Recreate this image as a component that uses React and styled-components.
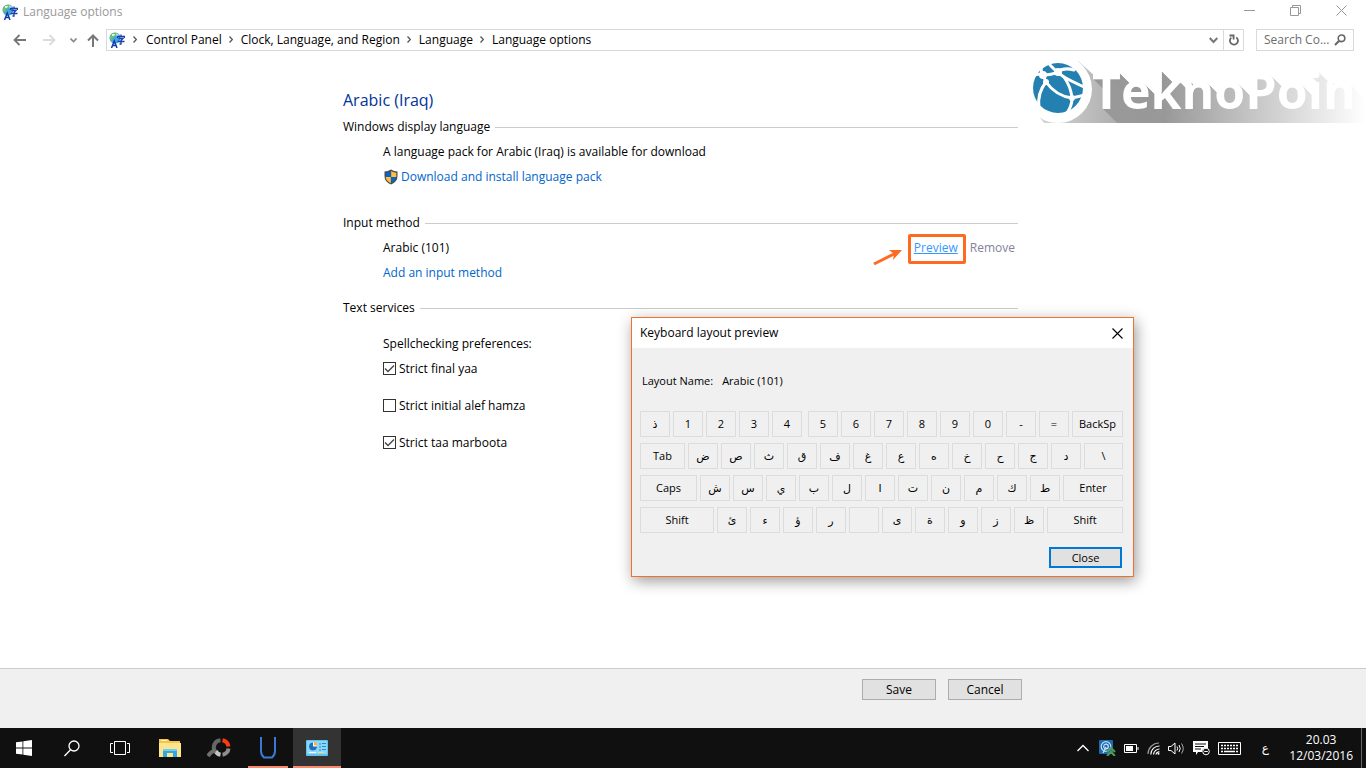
import { useState } from "react";
import styled, { createGlobalStyle, css } from "styled-components";

const BREADCRUMBS = [
  "Control Panel",
  "Clock, Language, and Region",
  "Language",
  "Language options",
];

// a key is either a plain string or { label, width, fill, gap }
const KEY_ROWS = [
  [
    "ذ", "1", "2", "3", "4",
    { label: "5", gap: true },
    "6", "7", "8", "9", "0", "-", "=",
    { label: "BackSp", fill: true },
  ],
  [
    { label: "Tab", width: 45 },
    "ض", "ص", "ث", "ق", "ف", "غ", "ع", "ه", "خ", "ح", "ج", "د",
    { label: "\\", fill: true },
  ],
  [
    { label: "Caps", width: 57 },
    "ش", "س", "ي", "ب", "ل", "ا", "ت", "ن", "م", "ك", "ط",
    { label: "Enter", fill: true },
  ],
  [
    { label: "Shift", width: 74 },
    "ئ", "ء", "ؤ", "ر", "", "ى", "ة", "و", "ز", "ظ",
    { label: "Shift", fill: true },
  ],
];

const SPELLING = [
  { id: "yaa", label: "Strict final yaa", checked: true },
  { id: "hamza", label: "Strict initial alef hamza", checked: false },
  { id: "marboota", label: "Strict taa marboota", checked: true },
];

export default function App() {
  const [prefs, setPrefs] = useState(SPELLING);

  const toggle = (id) => {
    setPrefs(prefs.map((p) => (p.id === id ? { ...p, checked: !p.checked } : p)));
  };

  return (
    <>
      <GlobalStyle />
      <Screen>
        <TitleBar>
          <LanguageIcon />
          <WindowTitle>Language options</WindowTitle>
          <WindowControls />
        </TitleBar>
        <NavBar />
        <Main>
          <Content>
            <Heading>Arabic (Iraq)</Heading>

            <Section $space={24}>
              <Legend>Windows display language</Legend>
              <Row>A language pack for Arabic (Iraq) is available for download</Row>
              <Row>
                <ShieldIcon />
                <Link href="#download">Download and install language pack</Link>
              </Row>
            </Section>

            <Section $space={13}>
              <Legend>Input method</Legend>
              <Row>
                Arabic (101)
                <Actions>
                  <Highlight>
                    <PreviewLink href="#preview">Preview</PreviewLink>
                    <Arrow viewBox="0 0 30 18">
                      <path d="M1 16L21 6" stroke="#ff6a23" strokeWidth="3" fill="none" />
                      <path d="M29 2L16 2L21 6L20 12Z" fill="#ff6a23" />
                    </Arrow>
                  </Highlight>
                  <RemoveLink href="#remove">Remove</RemoveLink>
                </Actions>
              </Row>
              <Row>
                <Link href="#add">Add an input method</Link>
              </Row>
            </Section>

            <Section $space={0}>
              <Legend>Text services</Legend>
              <Preferences>
                <Row>Spellchecking preferences:</Row>
                {prefs.map((p) => (
                  <CheckRow key={p.id}>
                    <Checkbox
                      type="checkbox"
                      checked={p.checked}
                      onChange={() => toggle(p.id)}
                    />
                    {p.label}
                  </CheckRow>
                ))}
              </Preferences>
            </Section>
          </Content>
        </Main>
        <Footer>
          <FooterButtons>
            <Button>Save</Button>
            <Button>Cancel</Button>
          </FooterButtons>
        </Footer>
        <Taskbar />

        <Watermark />
        <KeyboardPreview />
      </Screen>
    </>
  );
}

function WindowControls() {
  return (
    <Controls>
      <ControlButton aria-label="Minimize">
        <svg width="11" height="11" viewBox="0 0 11 11">
          <path d="M0 5.5H11" stroke="#999" />
        </svg>
      </ControlButton>
      <ControlButton aria-label="Restore">
        <svg width="11" height="11" viewBox="0 0 11 11" fill="none" stroke="#999">
          <path d="M.5 2.5H8.5V10.5H.5ZM2.5 2.5V.5H10.5V8.5H8.5" />
        </svg>
      </ControlButton>
      <ControlButton aria-label="Close window">
        <svg width="11" height="11" viewBox="0 0 11 11">
          <path d="M.5.5L10.5 10.5M10.5.5L.5 10.5" stroke="#999" />
        </svg>
      </ControlButton>
    </Controls>
  );
}

function NavBar() {
  return (
    <Nav>
      <NavButtons>
        <NavButton aria-label="Back" $width={28}>
          <svg width="13" height="12" viewBox="0 0 13 12" fill="none" stroke="#777" strokeWidth="1.8">
            <path d="M13 6H2M6.5 1L1.5 6L6.5 11" />
          </svg>
        </NavButton>
        <NavButton aria-label="Forward" $width={32}>
          <svg width="13" height="12" viewBox="0 0 13 12" fill="none" stroke="#dcdcdc" strokeWidth="1.8">
            <path d="M0 6H11M6.5 1L11.5 6L6.5 11" />
          </svg>
        </NavButton>
        <NavButton aria-label="Recent locations" $width={16}>
          <svg width="7" height="5" viewBox="0 0 7 5" fill="none" stroke="#888" strokeWidth="1.6">
            <path d="M.5.5L3.5 3.5L6.5.5" />
          </svg>
        </NavButton>
        <NavButton aria-label="Up" $width={24}>
          <svg width="12" height="13" viewBox="0 0 12 13" fill="none" stroke="#777" strokeWidth="2">
            <path d="M6 13V2M1 6.5L6 1.5L11 6.5" />
          </svg>
        </NavButton>
      </NavButtons>
      <AddressBar>
        <LanguageIcon />
        {BREADCRUMBS.map((crumb) => (
          <Crumb key={crumb}>
            <svg width="4" height="7" viewBox="0 0 4 7" fill="none" stroke="#555" strokeWidth="1.3">
              <path d="M.5.5L3.4 3.5L.5 6.5" />
            </svg>
            <a href="#crumb">{crumb}</a>
          </Crumb>
        ))}
        <AddressButton aria-label="Previous locations">
          <svg width="9" height="7" viewBox="0 0 9 7" fill="none" stroke="#777" strokeWidth="2">
            <path d="M.7 1L4.5 5L8.3 1" />
          </svg>
        </AddressButton>
        <AddressButton aria-label="Refresh" $divided>
          <svg width="10" height="12" viewBox="0 0 10 12" fill="none" stroke="#666" strokeWidth="1.8">
            <path d="M7.3 3.4A4 4 0 1 1 2.3 3.6" />
            <path d="M.5 1.5H4.6V5.6" />
          </svg>
        </AddressButton>
      </AddressBar>
      <SearchBox>
        <input type="text" aria-label="Search" placeholder="Search Co..." />
        <svg width="12" height="12" viewBox="0 0 12 12" fill="none" stroke="#666">
          <circle cx="7.5" cy="4.3" r="3.3" strokeWidth="1.6" />
          <path d="M5.2 6.7L1 11" strokeWidth="2" />
        </svg>
      </SearchBox>
    </Nav>
  );
}

function KeyboardPreview() {
  return (
    <Dialog role="dialog" aria-label="Keyboard layout preview">
      <DialogTitle>
        Keyboard layout preview
        <DialogClose aria-label="Close dialog">
          <svg width="11" height="11" viewBox="0 0 11 11">
            <path d="M.5.5L10.5 10.5M10.5.5L.5 10.5" stroke="#000" strokeWidth="1.1" />
          </svg>
        </DialogClose>
      </DialogTitle>
      <DialogBody>
        <LayoutName>
          <dt>Layout Name:</dt>
          <dd>Arabic (101)</dd>
        </LayoutName>
        <Keyboard>
          {KEY_ROWS.map((row, r) => (
            <KeyRow key={r}>
              {row.map((k, i) => {
                const item = typeof k === "string" ? { label: k } : k;
                return (
                  <Key
                    key={i}
                    $width={item.width}
                    $fill={item.fill}
                    $gap={item.gap}
                    aria-label={item.label || "Blank key"}
                  >
                    {item.label}
                  </Key>
                );
              })}
            </KeyRow>
          ))}
        </Keyboard>
        <CloseButton>Close</CloseButton>
      </DialogBody>
    </Dialog>
  );
}

function Watermark() {
  return (
    <Logo>
      <LogoMark viewBox="0 0 100 66">
        <defs>
          <linearGradient id="discShade" x1="0" x2="1">
            <stop offset="0" stopColor="#d8d8d8" />
            <stop offset="1" stopColor="#a8a8a8" />
          </linearGradient>
        </defs>
        <path d="M4 53L14 66H100V50L48 4Z" fill="url(#discShade)" />
        <circle cx="28" cy="32" r="34" fill="#fff" />
        <circle cx="28" cy="31" r="25" fill="#2380b0" />
        <g stroke="#fff" fill="none" strokeWidth="3" strokeLinecap="round">
          <path d="M1 20Q6 16 13 18Q22 18 27 15Q34 10 44 13" />
          <path d="M13 18Q9 12 13 7M13 18L16 25" />
          <path d="M27 15L34 20Q41 24 54 30M27 15L20 8" />
          <path d="M16 25Q7 36 9 51M16 25Q26 39 42 41" />
          <path d="M34 20Q41 30 42 41" />
          <path d="M42 41L55 38M42 41Q42 50 36 57" />
        </g>
        <g fill="#fff">
          <circle cx="13" cy="18" r="4" />
          <circle cx="28" cy="15" r="4" />
          <circle cx="42" cy="41" r="3" />
          <circle cx="16" cy="25" r="3" />
        </g>
      </LogoMark>
      <LogoText>TeknoPoin</LogoText>
    </Logo>
  );
}

function LanguageIcon() {
  return (
    <svg width="16" height="16" viewBox="0 0 16 16" aria-hidden="true">
      <circle cx="6" cy="6" r="5.5" fill="#43a6dd" />
      <path d="M2 3Q5 0 8 1L7 4L4 5L3 8L1 7Q0 5 2 3Z" fill="#76c25a" />
      <path d="M3 2L6 2L5 4L3 4Z" fill="#e4f7d4" />
      <path d="M7 1.5L10 3L8 5Z" fill="#d2eefa" />
      <path
        d="M12 2.5V4M8.5 6V4.5H15.5V6M9.5 6.5H14L12 8.5V12L10.5 12M8.5 9.5H15.5"
        stroke="#1a3fae"
        strokeWidth="1.3"
        fill="none"
      />
      <path d="M2.5 16L5.3 9L8 16M3.5 13.5H7" stroke="#0f3aa8" strokeWidth="1.5" fill="none" />
    </svg>
  );
}

function ShieldIcon() {
  return (
    <svg width="16" height="16" viewBox="0 0 16 16" aria-hidden="true">
      <path d="M8 .5Q11 2.5 14.5 2.5V7Q14.5 13 8 15.5Q1.5 13 1.5 7V2.5Q5 2.5 8 .5Z" fill="#4a4a4a" />
      <path d="M7.8 2Q5.5 3.5 2.7 3.7V8H7.8Z" fill="#0a63cc" />
      <path d="M8.2 2Q10.5 3.5 13.3 3.7V8H8.2Z" fill="#ffc13b" />
      <path d="M2.7 8H7.8V14.2Q3 12 2.7 8Z" fill="#ffc13b" />
      <path d="M8.2 8H13.3Q13 12 8.2 14.2Z" fill="#0a63cc" />
    </svg>
  );
}

function Taskbar() {
  return (
    <Bar>
      <TaskButton aria-label="Start">
        <svg width="16" height="16" viewBox="0 0 16 16" fill="#fff">
          <path d="M0 2.3L6.5 1.4V7.6H0ZM7.3 1.3L16 0V7.6H7.3ZM0 8.4H6.5V14.6L0 13.7ZM7.3 8.4H16V16L7.3 14.7Z" />
        </svg>
      </TaskButton>
      <TaskButton aria-label="Search Windows">
        <svg width="16" height="17" viewBox="0 0 16 17" fill="none" stroke="#fff" strokeWidth="1.3">
          <circle cx="10" cy="6" r="5" />
          <path d="M6.5 9.7L.5 16" />
        </svg>
      </TaskButton>
      <TaskButton aria-label="Task view">
        <svg width="20" height="14" viewBox="0 0 20 14" fill="none" stroke="#fff">
          <path d="M4.5.5H15.5V13.5H4.5ZM3 2.5H.5V11.5H3M17 2.5H19.5V11.5H17" />
        </svg>
      </TaskButton>
      <Apps>
        <TaskButton aria-label="File Explorer">
          <svg width="22" height="18" viewBox="0 0 22 18">
            <path d="M0 0H9L11 2H21V18H0Z" fill="#f3c54b" />
            <path d="M0 4H22V18H0Z" fill="#ffe38d" />
            <path d="M2 1.5H8" stroke="#fff3c4" />
            <path d="M4 18V10H18V18H14V14H8V18Z" fill="#2fa8e0" />
            <path d="M4 10H18V12H4Z" fill="#6fcdf4" />
          </svg>
        </TaskButton>
        <TaskButton aria-label="Screen recorder">
          <svg width="24" height="20" viewBox="0 0 24 20" fill="none" strokeWidth="4">
            <path d="M8 13A7 7 0 0 1 13.5 2.2" stroke="#666" />
            <path d="M15.5 2.2A7.5 7.5 0 0 1 21.5 8.5" stroke="#ff3a12" />
            <path d="M21.5 10.5A7 7 0 0 1 15.5 16.8" stroke="#8d8d8d" />
            <path d="M13.5 16.8A7 7 0 0 1 8.5 13" stroke="#c4c4c4" />
            <path d="M8.5 12.5Q4.5 13 1 18" stroke="#707070" />
          </svg>
        </TaskButton>
        <TaskButton aria-label="Uninstaller" $running>
          <svg width="16" height="22" viewBox="0 0 16 22" fill="none" stroke="#3b78d8" strokeWidth="2">
            <path d="M1 0V14Q1 18 4 20.5H12Q15 18 15 14V0" />
          </svg>
        </TaskButton>
        <TaskButton aria-label="Control Panel" $running $active>
          <svg width="22" height="16" viewBox="0 0 22 16">
            <rect width="22" height="16" rx="1" fill="#5cc4f2" />
            <rect x="1" y="1" width="20" height="13" fill="#8ad9fa" />
            <circle cx="7" cy="6.5" r="4" fill="#fff" />
            <path d="M7 6.5V2.5A4 4 0 1 0 11 6.5Z" fill="#1b6fc2" />
            <path d="M8 5.5V2A4 4 0 0 1 11.5 5.5Z" fill="#ffb52e" />
            <path d="M13 4H15M16 3.5H20M13 7H15M16 6.5H20M13 10H15M16 9.5H20" stroke="#2b87c7" />
            <path d="M3 12.5H10" stroke="#fff" />
            <path d="M12 12.5H18" stroke="#ffd76a" />
          </svg>
        </TaskButton>
      </Apps>
      <Tray>
        <svg width="14" height="8" viewBox="0 0 14 8" fill="none" stroke="#fff" strokeWidth="1.3">
          <path d="M.5 7L6 1.5L11.5 7" />
        </svg>
        <svg width="17" height="16" viewBox="0 0 17 16">
          <rect width="14" height="14" rx="1" fill="#2069ad" />
          <g fill="none" stroke="#bfe2fa" strokeWidth="1.2">
            <circle cx="7" cy="6.5" r="4.8" />
            <circle cx="7" cy="6.5" r="2.3" />
            <path d="M7 7L4 13" />
          </g>
          <path d="M8 12L12 8L16 12M8 16L12 12L16 16" stroke="#4f9b57" strokeWidth="2" fill="none" />
        </svg>
        <svg width="15" height="9" viewBox="0 0 15 9">
          <path d="M.5.5H12.5V8.5H.5ZM14 3V6" stroke="#fff" fill="none" />
          <rect x="2" y="2" width="7" height="5" fill="#fff" />
        </svg>
        <svg width="13" height="13" viewBox="0 0 13 13" fill="none" stroke="#fff" strokeWidth="1.2">
          <path d="M1 12A11 11 0 0 1 12 1" stroke="#999" />
          <path d="M3.8 12.5A8.5 8.5 0 0 1 12.5 4M6.5 12.5A6 6 0 0 1 12.5 7M9 12.5A3 3 0 0 1 12.5 10" />
          <circle cx="11.5" cy="11.8" r="1" fill="#fff" stroke="none" />
        </svg>
        <svg width="17" height="13" viewBox="0 0 17 13" fill="none" stroke="#fff">
          <path d="M.5 4.5H3L7 1V12L3 8.5H.5Z" />
          <path d="M9 4.5Q10.3 6.5 9 8.5M11 3Q13.5 6.5 11 10" />
          <path d="M13.5 1.5Q17 6.5 13.5 11.5" stroke="#aaa" />
        </svg>
        <svg width="17" height="16" viewBox="0 0 17 16">
          <path d="M0 1H15V8.5A4 4 0 0 0 9 12H5L3 15V12H0Z" fill="#fff" />
          <path d="M2 4H13M2 6.5H11M2 9H8" stroke="#111" />
          <circle cx="13" cy="11.5" r="3.3" fill="#111" stroke="#fff" />
          <path d="M11.2 11.5H14.8" stroke="#fff" />
        </svg>
        <svg width="23" height="13" viewBox="0 0 23 13">
          <path d="M.5.5H22.5V12.5H.5Z" stroke="#fff" fill="none" />
          <path d="M3 3.5H20M3 6.5H20" stroke="#fff" strokeWidth="1.5" strokeDasharray="2 1" />
          <path d="M3 9.5H5M6 9.5H17M18 9.5H20" stroke="#fff" strokeWidth="1.5" />
        </svg>
        <InputLanguage lang="ar">ع</InputLanguage>
        <Clock>
          <time>20.03</time>
          <time>12/03/2016</time>
        </Clock>
        <ShowDesktop aria-label="Show desktop" />
      </Tray>
    </Bar>
  );
}

const GlobalStyle = createGlobalStyle`
  * {
    box-sizing: border-box;
  }

  body {
    margin: 0;
    background: #fff;
    color: #000;
    font: 12px/16px "Open Sans", "Noto Sans", "DejaVu Sans", sans-serif;
  }

  button,
  input {
    font: inherit;
    color: inherit;
  }

  svg {
    flex: none;
    display: block;
  }
`;

const Screen = styled.div`
  position: relative;
  display: flex;
  flex-direction: column;
  min-height: 100vh;
  margin-right: 5px;
`;

const TitleBar = styled.header`
  display: flex;
  align-items: center;
  gap: 5px;
  height: 24px;
  padding: 0 2px;
`;

const WindowTitle = styled.h1`
  margin: 0;
  flex: 1;
  font-size: 12px;
  font-weight: 400;
  color: #999;
`;

const Controls = styled.div`
  display: flex;
  align-self: flex-start;
`;

const plainButton = css`
  display: flex;
  align-items: center;
  justify-content: center;
  padding: 0;
  border: 0;
  background: none;
`;

const ControlButton = styled.button`
  ${plainButton}
  width: 46px;
  height: 20px;
`;

const Nav = styled.nav`
  display: flex;
  height: 32px;
  padding: 5px 12px 5px 5px;
`;

const NavButtons = styled.div`
  display: flex;
`;

const NavButton = styled.button`
  ${plainButton}
  width: ${(p) => p.$width}px;
`;

const AddressBar = styled.div`
  flex: 1;
  display: flex;
  align-items: center;
  margin: 0 12px 0 1px;
  padding: 0 0 1px 2px;
  border: 1px solid #d9d9d9;
`;

const Crumb = styled.span`
  display: flex;
  align-items: center;
  gap: 9px;
  margin-left: 8px;

  a {
    color: inherit;
    text-decoration: none;
  }

  & + & {
    gap: 8px;
    margin-left: 7px;
  }
`;

const AddressButton = styled.button`
  ${plainButton}
  align-self: stretch;
  width: 20px;
  border-left: ${(p) => (p.$divided ? "1px solid #d9d9d9" : "0")};
  margin: 0 0 -1px ${(p) => (p.$divided ? "0" : "auto")};
`;

const SearchBox = styled.div`
  display: flex;
  align-items: center;
  width: 98px;
  padding: 0 7px;
  border: 1px solid #d9d9d9;

  input {
    flex: 1;
    min-width: 0;
    padding: 0;
    border: 0;
    outline: 0;
  }

  input::placeholder {
    color: #6d6d6d;
  }
`;

const Main = styled.main`
  flex: 1;
  padding-top: 32px;
`;

const Content = styled.div`
  max-width: 680px;
  margin: 0 auto;
`;

const Heading = styled.h2`
  margin: 0 0 5px;
  font-size: 16px;
  font-weight: 400;
  line-height: 24px;
  color: #003399;
`;

const Section = styled.section`
  padding-left: 40px;
  margin-bottom: ${(p) => p.$space}px;
`;

const Legend = styled.h3`
  display: flex;
  align-items: center;
  gap: 5px;
  margin: 0 5px 2px -40px;
  font-size: 12px;
  font-weight: 400;
  line-height: 20px;

  &::after {
    content: "";
    flex: 1;
    height: 1px;
    background: #ccc;
  }
`;

const Row = styled.div`
  display: flex;
  align-items: center;
  gap: 2px;
  height: 25px;
`;

const Link = styled.a`
  color: #0066cc;
  text-decoration: none;
`;

const PreviewLink = styled.a`
  color: #3399ff;
`;

const RemoveLink = styled(Link)`
  color: #838399;
`;

const Actions = styled.div`
  display: flex;
  gap: 12px;
  margin-left: auto;
  margin-right: 8px;
`;

const Highlight = styled.span`
  position: relative;

  &::after {
    content: "";
    position: absolute;
    inset: -6px -8px -8px -6px;
    border: 3px solid #ff6a23;
    border-radius: 2px;
    pointer-events: none;
  }
`;

const Arrow = styled.svg`
  position: absolute;
  right: calc(100% + 11px);
  top: 8px;
  width: 30px;
  height: 18px;
`;

const Preferences = styled.div`
  padding-top: 11px;
`;

const CheckRow = styled.label`
  display: flex;
  align-items: center;
  gap: 3px;
  height: 25px;
  margin-bottom: 12px;
`;

const Checkbox = styled.input`
  appearance: none;
  width: 13px;
  height: 13px;
  margin: 0;
  border: 1px solid #333;
  background: #fff;

  &:checked {
    background: #fff
      url("data:image/svg+xml,%3Csvg xmlns='http://www.w3.org/2000/svg' viewBox='0 0 11 11'%3E%3Cpath d='M1 5.5L4 8.5L10 2.5' fill='none' stroke='%23444' stroke-width='1.3'/%3E%3C/svg%3E");
  }
`;

const Footer = styled.footer`
  height: 60px;
  padding-top: 10px;
  border-top: 1px solid #ccc;
  background: #f0f0f0;
`;

const FooterButtons = styled.div`
  display: flex;
  justify-content: flex-end;
  gap: 12px;
  max-width: 680px;
  margin: 0 auto;
  padding-right: 1px;
`;

const Button = styled.button`
  ${plainButton}
  width: 74px;
  height: 21px;
  border: 1px solid #adadad;
  background: #e1e1e1;
`;

const Bar = styled.div`
  display: flex;
  height: 40px;
  background: #101010;
  color: #fff;
`;

const Apps = styled.div`
  display: flex;
  gap: 1px;
  margin-left: 2px;
`;

const TaskButton = styled.button`
  ${plainButton}
  width: 48px;
  background: ${(p) => (p.$active ? "#333" : "none")};

  ${(p) =>
    p.$running &&
    css`
      background-image: linear-gradient(#f98a6c, #f98a6c);
      background-repeat: no-repeat;
      background-position: center bottom;
      background-size: ${p.$active ? "100%" : "40px"} 2px;
    `}
`;

const Tray = styled.div`
  display: flex;
  align-items: center;
  gap: 8px;
  margin-left: auto;
`;

const InputLanguage = styled.span`
  width: 16px;
  margin: 0 8px;
  text-align: center;
  font-family: "DejaVu Sans", sans-serif;
`;

const Clock = styled.div`
  display: flex;
  flex-direction: column;
  align-items: center;
`;

const ShowDesktop = styled.button`
  ${plainButton}
  align-self: stretch;
  width: 5px;
  border-left: 1px solid #666;
`;

// long cast shadow running down and to the right of the letters
const castShadow = Array.from(
  { length: 60 },
  (_, i) => `${i + 1}px ${i + 1}px #999`
).join(", ");

const Logo = styled.div`
  position: absolute;
  top: 57px;
  right: 0;
  display: flex;
  width: 336px;
  height: 66px;
  overflow: hidden;
  mask-image: linear-gradient(to right, #000 40%, transparent 100%);
`;

const LogoMark = styled.svg`
  width: 100px;
  height: 66px;
  margin-right: -38px;
`;

const LogoText = styled.span`
  position: relative;
  font: 700 50px/66px "Open Sans", "Noto Sans", sans-serif;
  color: #fff;
  text-shadow: ${castShadow};
`;

const Dialog = styled.div`
  position: absolute;
  top: 317px;
  left: 631px;
  width: 503px;
  border: 1px solid #f0702c;
  background: #f0f0f0;
  box-shadow: 2px 4px 14px rgba(0, 0, 0, 0.4);
`;

const DialogTitle = styled.div`
  display: flex;
  align-items: center;
  justify-content: space-between;
  height: 30px;
  padding: 0 8px;
  background: #fff;
`;

const DialogClose = styled.button`
  ${plainButton}
  width: 15px;
  height: 28px;
`;

const DialogBody = styled.div`
  padding: 25px 10px 8px 8px;
  font-size: 11px;
`;

const LayoutName = styled.dl`
  display: flex;
  gap: 9px;
  margin: 0 0 22px 2px;

  dd {
    margin: 0;
  }
`;

const Keyboard = styled.div`
  display: flex;
  flex-direction: column;
  gap: 6px;
`;

const KeyRow = styled.div`
  display: flex;
  gap: 3px;
`;

const Key = styled.button`
  ${plainButton}
  flex: ${(p) => (p.$fill ? "1" : "none")};
  width: ${(p) => p.$width || 30}px;
  height: 26px;
  margin-left: ${(p) => (p.$gap ? 3 : 0)}px;
  border: 1px solid #dcdcdc;
  font-family: "Open Sans", "DejaVu Sans", sans-serif;
`;

const CloseButton = styled(Button)`
  width: 73px;
  margin: 14px 1px 0 auto;
  border: 2px solid #0078d7;
`;
